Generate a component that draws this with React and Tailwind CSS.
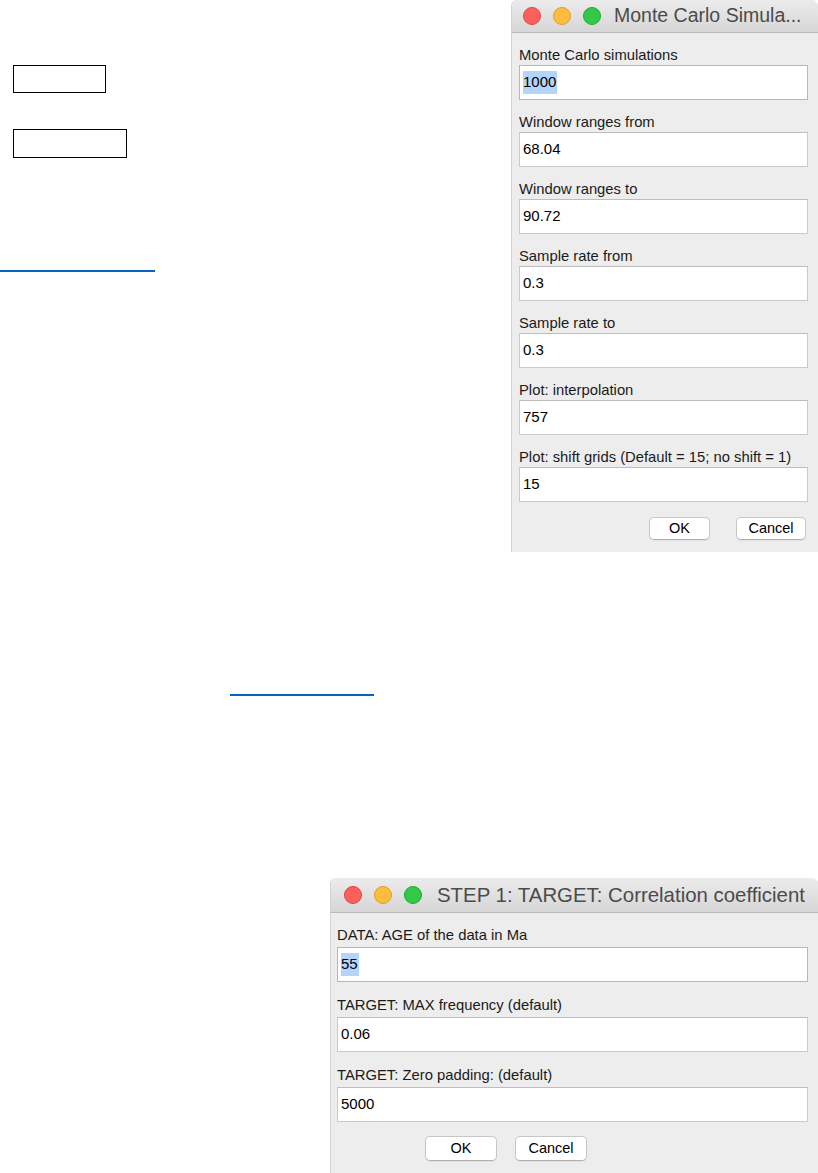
import React from "react";

const font = { fontFamily: '"Liberation Sans", Arial, sans-serif' };

function Lights() {
  return (
    <div className="flex items-center gap-[12px]">
      <span className="w-[18px] h-[18px] rounded-full bg-[#fc605c] border border-[#e0443e]" />
      <span className="w-[18px] h-[18px] rounded-full bg-[#fdbc40] border border-[#dea123]" />
      <span className="w-[18px] h-[18px] rounded-full bg-[#34c84a] border border-[#1aab29]" />
    </div>
  );
}

function Field({ label, value, focused, gap }) {
  return (
    <div className="flex flex-col">
      <div className={`text-[14.8px] leading-[16px] text-[#1a1a1a] whitespace-nowrap ${gap}`}>{label}</div>
      <div
        className={`h-[35px] bg-white flex items-center px-[3px] text-[15px] text-black border ${
          focused ? "border-[#95bdf0]" : "border-[#cacaca] border-t-[#bdbdbd]"
        }`}
      >
        <span className={focused ? "bg-[#b3d4fc] pr-[1px]" : ""}>{value}</span>
      </div>
    </div>
  );
}

function Btn({ children, w }) {
  return (
    <div
      className={`${w} bg-white border border-[#c6c6c6] border-b-[#b0b0b0] rounded-[5px] flex items-center justify-center text-[14.5px] text-black shadow-[0_1px_0_rgba(0,0,0,0.05)]`}
    >
      {children}
    </div>
  );
}

export default function App() {
  const fields1 = [
    ["Monte Carlo simulations", "1000", true],
    ["Window ranges from", "68.04"],
    ["Window ranges to", "90.72"],
    ["Sample rate from", "0.3"],
    ["Sample rate to", "0.3"],
    ["Plot: interpolation", "757"],
    ["Plot: shift grids (Default = 15; no shift = 1)", "15"],
  ];
  const fields2 = [
    ["DATA: AGE of the data in Ma", "55", true],
    ["TARGET: MAX frequency (default)", "0.06"],
    ["TARGET: Zero padding: (default)", "5000"],
  ];

  return (
    <div className="w-[818px] h-[1173px] bg-white overflow-hidden" style={font}>
      {/* top part */}
      <div className="flex h-[552px]">
        <div className="w-[511px] flex flex-col">
          <div className="mt-[65px] ml-[13px] w-[93px] h-[28px] border border-black" />
          <div className="mt-[36px] ml-[13px] w-[114px] h-[29px] border border-black" />
          <div className="mt-[112px] w-[155px] h-[1.5px] bg-[#0563c1]" />
        </div>

        <div className="w-[307px] flex flex-col bg-[#ededed] border-l border-[#d2d2d2] rounded-t-[6px]">
          <div className="h-[33px] shrink-0 flex items-center pl-[11px] bg-gradient-to-b from-[#ececec] to-[#d6d6d6] border-b border-[#b9b9b9] rounded-t-[6px]">
            <Lights />
            <span className="ml-[13px] text-[19.5px] text-[#4b4b4b] whitespace-nowrap">
              Monte Carlo Simula...
            </span>
          </div>
          <div className="flex flex-col gap-[14px] pt-[14px] pl-[7px] pr-[10px]">
            {fields1.map(([l, v, f]) => (
              <Field key={l} label={l} value={v} focused={f} gap="mb-[2px]" />
            ))}
          </div>
          <div className="flex gap-[26px] mt-[15px] pl-[137px] h-[23px]">
            <Btn w="w-[61px]">OK</Btn>
            <Btn w="w-[70px]">Cancel</Btn>
          </div>
        </div>
      </div>

      {/* middle part */}
      <div className="h-[326px] flex flex-col">
        <div className="mt-[142px] ml-[230px] w-[144px] h-[1.5px] bg-[#0563c1]" />
      </div>

      {/* bottom dialog */}
      <div className="flex">
        <div className="ml-[330px] w-[488px] h-[295px] flex flex-col bg-[#ededed] border-l border-[#d2d2d2] rounded-t-[6px]">
          <div className="h-[35px] shrink-0 flex items-center pl-[13px] bg-gradient-to-b from-[#ececec] to-[#d6d6d6] border-b border-[#b9b9b9] rounded-t-[6px]">
            <Lights />
            <span className="ml-[15px] text-[20.4px] text-[#4b4b4b] whitespace-nowrap">
              STEP 1: TARGET: Correlation coefficient
            </span>
          </div>
          <div className="flex flex-col gap-[15px] pt-[14px] pl-[6px] pr-[10px]">
            {fields2.map(([l, v, f]) => (
              <Field key={l} label={l} value={v} focused={f} gap="mb-[4px]" />
            ))}
          </div>
          <div className="flex gap-[18px] mt-[14px] pl-[94px] h-[25px]">
            <Btn w="w-[72px]">OK</Btn>
            <Btn w="w-[72px]">Cancel</Btn>
          </div>
        </div>
      </div>
    </div>
  );
}
